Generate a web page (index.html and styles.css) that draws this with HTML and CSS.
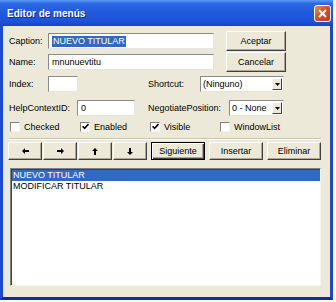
FILE: index.html
```html
<!DOCTYPE html>
<html lang="es">
<head>
    <meta charset="UTF-8">
    <title>Editor de menús</title>
    <link rel="stylesheet" href="styles.css">
</head>
<body>
    <div class="window">
        <div class="titlebar">
            <span class="title">Editor de menús</span>
            <span class="close">
                <svg width="9" height="9" viewBox="0 0 9 9"><path d="M1 1L8 8M8 1L1 8" stroke="#fff" stroke-width="2"/></svg>
            </span>
        </div>

        <div class="client">
            <div class="row tall">
                <span class="lbl w39">Caption:</span>
                <span class="field w166"><span class="sel">NUEVO TITULAR</span></span>
                <button class="btn cmd">Aceptar</button>
            </div>

            <div class="row tall r2">
                <span class="lbl w39">Name:</span>
                <span class="field w166">mnunuevtitu</span>
                <button class="btn cmd">Cancelar</button>
            </div>

            <div class="row r3">
                <span class="lbl w39">Index:</span>
                <span class="field w30"></span>
                <span class="lbl w52 ml70">Shortcut:</span>
                <span class="combo w84">
                    <span class="val">(Ninguno)</span>
                    <span class="drop"><svg width="5" height="3" viewBox="0 0 5 3"><path d="M0 0H5L2.5 3Z" fill="#000"/></svg></span>
                </span>
            </div>

            <div class="row r4">
                <span class="lbl w68">HelpContextID:</span>
                <span class="field w58">0</span>
                <span class="lbl w81 ml13">NegotiatePosition:</span>
                <span class="combo w55">
                    <span class="val">0 - None</span>
                    <span class="drop"><svg width="5" height="3" viewBox="0 0 5 3"><path d="M0 0H5L2.5 3Z" fill="#000"/></svg></span>
                </span>
            </div>

            <div class="row checks">
                <span class="opt"><span class="box"></span>Checked</span>
                <span class="opt"><span class="box"><svg width="7" height="7" viewBox="0 0 7 7"><path d="M0.5 3.2L2.6 5.4L6.5 1" stroke="#000" stroke-width="1.6" fill="none"/></svg></span>Enabled</span>
                <span class="opt"><span class="box"><svg width="7" height="7" viewBox="0 0 7 7"><path d="M0.5 3.2L2.6 5.4L6.5 1" stroke="#000" stroke-width="1.6" fill="none"/></svg></span>Visible</span>
                <span class="opt"><span class="box"></span>WindowList</span>
            </div>

            <div class="sep"></div>

            <div class="row tools">
                <button class="btn arrow"><svg width="7" height="6" viewBox="0 0 7 6"><path d="M0 3L3 0V2H7V4H3V6Z" fill="#000"/></svg></button>
                <button class="btn arrow"><svg width="7" height="6" viewBox="0 0 7 6"><path d="M7 3L4 0V2H0V4H4V6Z" fill="#000"/></svg></button>
                <button class="btn arrow"><svg width="6" height="7" viewBox="0 0 6 7"><path d="M3 0L0 3H2V7H4V3H6Z" fill="#000"/></svg></button>
                <button class="btn arrow"><svg width="6" height="7" viewBox="0 0 6 7"><path d="M3 7L0 4H2V0H4V4H6Z" fill="#000"/></svg></button>
                <button class="btn act default">Siguiente</button>
                <button class="btn act">Insertar</button>
                <button class="btn act">Eliminar</button>
            </div>

            <div class="list">
                <div class="item selected">NUEVO TITULAR</div>
                <div class="item">MODIFICAR TITULAR</div>
            </div>
        </div>
    </div>
</body>
</html>
```

FILE: styles.css
```css
body {
    margin: 0;
    background: #ffffff;
    font-family: "Liberation Sans", Arial, sans-serif;
    font-size: 9px;
    color: #000;
}

.window {
    width: 333px;
    height: 300px;
    display: flex;
    flex-direction: column;
}

.titlebar {
    height: 26px;
    display: flex;
    align-items: center;
    justify-content: space-between;
    padding: 0 2px 0 7px;
    background: linear-gradient(#5b9bf8, #2c68e4 14%, #2159de 50%, #1c52d8 85%, #1543bf);
    color: #fff;
}

.title {
    font-weight: bold;
    font-size: 10px;
    text-shadow: 1px 1px #0c2a9a;
}

.close {
    width: 17px;
    height: 17px;
    box-sizing: border-box;
    border: 1px solid #fff;
    border-radius: 3px;
    background: linear-gradient(135deg, #ef8a66, #dc4f2a 45%, #c6391a);
    display: flex;
    align-items: center;
    justify-content: center;
}

.client {
    flex: 1;
    background: #ece9d8;
    border: 3px solid #1c48d0;
    border-top: 0;
    border-bottom-color: #0b2fa8;
    padding: 5px 0 0 6px;
}

.row {
    display: flex;
    align-items: center;
    height: 16px;
}

.row.tall {
    height: 20px;
}

.r2 { margin-top: 1px; }
.r3 { margin-top: 4px; }
.r4 { margin-top: 8px; }

.lbl { white-space: nowrap; }
.w39 { width: 39px; }
.w52 { width: 52px; }
.w68 { width: 68px; }
.w81 { width: 81px; }
.ml70 { margin-left: 70px; }
.ml13 { margin-left: 13px; }

.field {
    box-sizing: border-box;
    height: 16px;
    background: #fff;
    border: 1px solid;
    border-color: #8a8a8a #e4e4e4 #e4e4e4 #8a8a8a;
    padding-left: 3px;
    line-height: 14px;
    display: flex;
    align-items: center;
}

.w166 { width: 166px; }
.w30 { width: 30px; }
.w58 { width: 58px; }
.w84 { width: 84px; }
.w55 { width: 55px; }

.sel {
    background: #316ac5;
    color: #fff;
    line-height: 11px;
    padding: 0 1px;
}

.btn {
    box-sizing: border-box;
    background: #ece9d8;
    border: 1px solid;
    border-color: #fff #404040 #404040 #fff;
    box-shadow: inset -1px -1px #aca899;
    font: inherit;
    color: #000;
    padding: 0;
    display: flex;
    align-items: center;
    justify-content: center;
}

.cmd {
    width: 60px;
    height: 20px;
    margin-left: 12px;
}

.combo {
    box-sizing: border-box;
    height: 16px;
    display: flex;
    background: #fff;
    border: 1px solid;
    border-color: #8a8a8a #e4e4e4 #e4e4e4 #8a8a8a;
}

.combo .val {
    flex: 1;
    padding-left: 2px;
    line-height: 14px;
    white-space: nowrap;
}

.drop {
    width: 10px;
    margin: 1px;
    box-sizing: border-box;
    background: #ece9d8;
    border: 1px solid;
    border-color: #fff #404040 #404040 #fff;
    display: flex;
    align-items: center;
    justify-content: center;
}

.checks {
    margin-top: 5px;
    margin-left: 1px;
    height: 11px;
}

.opt {
    width: 70px;
    display: flex;
    align-items: center;
}

.box {
    width: 10px;
    height: 10px;
    box-sizing: border-box;
    background: #fff;
    border: 1px solid;
    border-color: #808080 #f4f4f4 #f4f4f4 #808080;
    margin-right: 4px;
    display: flex;
    align-items: center;
    justify-content: center;
}

.sep {
    margin-top: 6px;
    width: 312px;
    border-top: 1px solid #c8c4b0;
    border-bottom: 1px solid #fff;
}

.tools {
    margin-top: 2px;
    margin-left: -1px;
    height: 18px;
    gap: 1px;
}

.arrow {
    width: 34px;
    height: 18px;
}

.act {
    width: 54px;
    height: 18px;
    margin-left: 3px;
}

.default {
    border-color: #000;
    box-shadow: inset 1px 1px #fff, inset -1px -1px #404040, inset -2px -2px #aca899;
}

.list {
    margin-top: 8px;
    margin-left: 1px;
    width: 311px;
    height: 118px;
    box-sizing: border-box;
    background: #fff;
    border: 1px solid;
    border-color: #808080 #f6f6f0 #f6f6f0 #808080;
    box-shadow: inset 1px 1px #404040;
    padding: 1px 0 0 1px;
}

.item {
    height: 11px;
    line-height: 11px;
    padding-left: 1px;
    white-space: nowrap;
}

.item.selected {
    background: #316ac5;
    color: #fff;
}
```
